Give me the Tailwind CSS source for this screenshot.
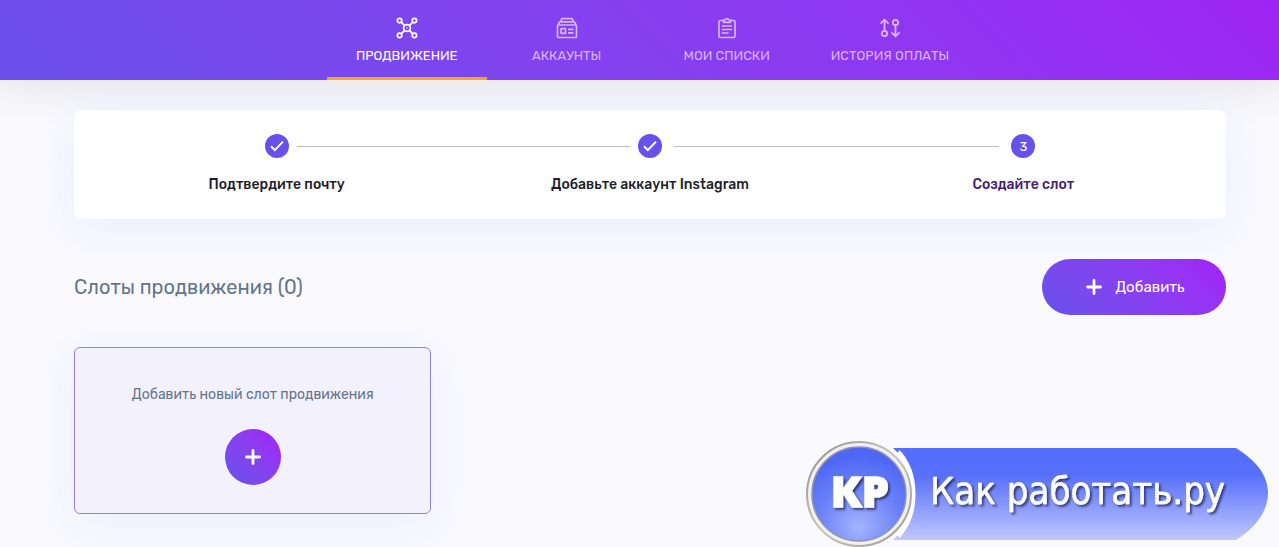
<!DOCTYPE html>
<html lang="ru">

<head>
    <meta charset="UTF-8">
    <meta name="viewport" content="width=device-width, initial-scale=1.0">
    <title>Продвижение</title>
    <script src="https://cdn.jsdelivr.net/npm/@tailwindcss/browser@4"></script>
</head>

<body class="relative min-h-screen overflow-hidden bg-[#f9f9fe] font-['Rubik','Roboto',sans-serif] text-[#1f1f2b]">
<header class="relative bg-linear-45 from-[#6a50ea] to-[#9e23f5] pl-[74px] pr-[53px] shadow-[0_0_40px_12px_rgba(0,0,0,0.08)]">
    <nav class="flex h-20 justify-center text-[13px] leading-4 font-normal uppercase">
        <a href="#" class="flex min-w-40 flex-col items-center border-b-3 border-[#faa21e] px-6 pt-4 text-white">
            <svg class="mb-2 size-6" viewBox="0 0 24 24" fill="none" stroke="currentColor" stroke-width="1.7">
                <circle cx="12" cy="12" r="3.4"/>
                <circle cx="12" cy="12" r="0.3" stroke-width="1"/>
                <circle cx="4.6" cy="4.6" r="2.2"/>
                <circle cx="19.4" cy="4.6" r="2.2"/>
                <circle cx="4.6" cy="19.4" r="2.2"/>
                <circle cx="19.4" cy="19.4" r="2.2"/>
                <path d="M6.2 6.2l3.5 3.5M17.8 6.2l-3.5 3.5M6.2 17.8l3.5-3.5M17.8 17.8l-3.5-3.5"/>
            </svg>
            Продвижение
        </a>
        <a href="#" class="flex min-w-40 flex-col items-center px-6 pt-4 text-[#d9b6fb]">
            <svg class="mb-2 size-6" viewBox="0 0 24 24" fill="none" stroke="currentColor" stroke-width="1.7" stroke-linejoin="round">
                <rect x="2.5" y="9" width="19" height="12.5" rx="1"/>
                <path d="M3 9l1.6-3.2h14.8L21 9M5.6 5.8l1.2-3.1h10.4l1.2 3.1"/>
                <rect x="6" y="12.7" width="4.5" height="4.6"/>
                <path d="M13 13.3h5.5M13 16.8h5.5"/>
            </svg>
            Аккаунты
        </a>
        <a href="#" class="flex min-w-40 flex-col items-center px-6 pt-4 text-[#d9b6fb]">
            <svg class="mb-2 size-6" viewBox="0 0 24 24" fill="none" stroke="currentColor" stroke-width="1.7" stroke-linejoin="round" stroke-linecap="round">
                <path d="M8.5 4.5h-3a1.5 1.5 0 0 0-1.5 1.5v14a1.5 1.5 0 0 0 1.5 1.5h13a1.5 1.5 0 0 0 1.5-1.5V6a1.5 1.5 0 0 0-1.5-1.5h-3"/>
                <path d="M8.5 6.3V4h1.7a1.9 1.9 0 0 1 3.6 0h1.7v2.3z"/>
                <path d="M7.5 10h9M7.5 13.5h9M7.5 17h5.5"/>
            </svg>
            Мои списки
        </a>
        <a href="#" class="flex min-w-40 flex-col items-center px-6 pt-4 text-[#d9b6fb]">
            <svg class="mb-2 size-6" viewBox="0 0 24 24" fill="none" stroke="currentColor" stroke-width="1.8" stroke-linejoin="round" stroke-linecap="round">
                <circle cx="6.5" cy="17.5" r="2.7"/>
                <path d="M6.5 14.8V4M3 7.2L6.5 3.7 10 7.2"/>
                <circle cx="17.5" cy="6.5" r="2.7"/>
                <path d="M17.5 9.2V20M14 16.8l3.5 3.5 3.5-3.5"/>
            </svg>
            История оплаты
        </a>
    </nav>
</header>

<main class="pt-[30px] pl-[74px] pr-[53px] pb-8">
    <ol class="relative grid grid-cols-3 rounded-lg bg-white px-4 py-6 text-center text-sm leading-[21px] font-medium shadow-[0_10px_40px_rgba(80,130,240,0.08)]">
        <li>
            <div class="grid grid-cols-[1fr_24px_1fr] items-center">
                <div></div>
                <span class="flex size-6 items-center justify-center rounded-full bg-[#6850ea] text-white">
                    <svg class="size-4" viewBox="0 0 16 16" fill="none" stroke="currentColor" stroke-width="2"><path d="M2 8.3l3.8 3.8L14 3.6"/></svg>
                </span>
                <div class="pl-2"><div class="h-px bg-[#bdbdbd]"></div></div>
            </div>
            <p class="mt-4">Подтвердите почту</p>
        </li>
        <li>
            <div class="grid grid-cols-[1fr_24px_1fr] items-center">
                <div class="pr-2"><div class="h-px bg-[#bdbdbd]"></div></div>
                <span class="flex size-6 items-center justify-center rounded-full bg-[#6850ea] text-white">
                    <svg class="size-4" viewBox="0 0 16 16" fill="none" stroke="currentColor" stroke-width="2"><path d="M2 8.3l3.8 3.8L14 3.6"/></svg>
                </span>
                <div class="pl-3"><div class="h-px bg-[#bdbdbd]"></div></div>
            </div>
            <p class="mt-4">Добавьте аккаунт Instagram</p>
        </li>
        <li>
            <div class="grid grid-cols-[1fr_24px_1fr] items-center">
                <div class="pr-3"><div class="h-px bg-[#bdbdbd]"></div></div>
                <span class="flex size-6 items-center justify-center rounded-full bg-[#6850ea] text-[13px] font-normal text-white">3</span>
                <div></div>
            </div>
            <p class="mt-4 text-[#46206f]">Создайте слот</p>
        </li>
    </ol>

    <div class="mt-10 flex items-center justify-between">
        <h1 class="text-xl leading-7 text-[#64748b]">Слоты продвижения (0)</h1>
        <button type="button" class="flex h-14 w-46 items-center justify-center gap-3 rounded-full bg-linear-45 from-[#6652ea] to-[#a41ff6] text-[15px] text-white">
            <svg class="size-5" viewBox="0 0 20 20" fill="none" stroke="currentColor" stroke-width="2.8" stroke-linecap="round"><path d="M10 3.5v13M3.5 10h13"/></svg>
            Добавить
        </button>
    </div>

    <div class="mt-8 grid grid-cols-3 gap-10">
        <section class="flex flex-col items-center rounded-md border border-[#9a80dc] bg-[#f3f1fe] px-6 pt-9 pb-7 shadow-[0_10px_40px_rgba(80,130,240,0.08)]">
            <p class="text-sm leading-[21px] text-[#64748b]">Добавить новый слот продвижения</p>
            <button type="button" aria-label="Добавить слот" class="mt-6 flex size-14 items-center justify-center rounded-full bg-linear-45 from-[#6652ea] to-[#a41ff6] text-white">
                <svg class="size-5" viewBox="0 0 20 20" fill="none" stroke="currentColor" stroke-width="2.8" stroke-linecap="round"><path d="M10 3.5v13M3.5 10h13"/></svg>
            </button>
        </section>
    </div>
</main>

<!-- site badge -->
<a href="#" class="fixed right-2.5 bottom-0">
    <svg class="h-[107px] w-[464px]" viewBox="0 0 464 107">
        <defs>
            <linearGradient id="ribbon" x1="0" y1="0" x2="0" y2="1">
                <stop offset="0" stop-color="#526efc"/>
                <stop offset="0.3" stop-color="#5870fa"/>
                <stop offset="1" stop-color="#bfc8fd"/>
            </linearGradient>
            <radialGradient id="disc" cx="0.5" cy="0.85" r="0.75">
                <stop offset="0" stop-color="#a3b4fd"/>
                <stop offset="0.6" stop-color="#6a80f8"/>
                <stop offset="1" stop-color="#4f68f4"/>
            </radialGradient>
            <linearGradient id="ring" x1="0" y1="0" x2="1" y2="1">
                <stop offset="0" stop-color="#8f8f90"/>
                <stop offset="0.5" stop-color="#c9c6c0"/>
                <stop offset="1" stop-color="#97958f"/>
            </linearGradient>
            <filter id="soft" x="-10%" y="-30%" width="120%" height="170%">
                <feDropShadow dx="2" dy="2" stdDeviation="1" flood-color="#1c2250" flood-opacity="0.75"/>
            </filter>
        </defs>
        <path d="M88 8H431C452 21 463 36 463 53S452 87 431 100H88C116 75 116 33 88 8z" fill="url(#ribbon)"/>
        <path d="M93 12C113 34 113 74 93 96" fill="none" stroke="#fff" stroke-width="5"/>
        <circle cx="54" cy="54" r="52" fill="#f1f0ec" stroke="url(#ring)" stroke-width="2"/>
        <circle cx="54" cy="54" r="47" fill="url(#disc)" stroke="#8e93b5" stroke-width="1.5"/>
        <g fill="#fff" filter="url(#soft)">
            <text x="55" y="67" text-anchor="middle" font-size="43" stroke="#fff" stroke-width="1.5" class="font-['Noto_Sans','Open_Sans',sans-serif] font-black">КР</text>
            <text x="125" y="64" font-size="38" stroke="#fff" stroke-width="0.5" class="font-['DejaVu_Sans_Condensed','Noto_Sans',sans-serif]">Как работать.ру</text>
        </g>
    </svg>
</a>
</body>

</html>
